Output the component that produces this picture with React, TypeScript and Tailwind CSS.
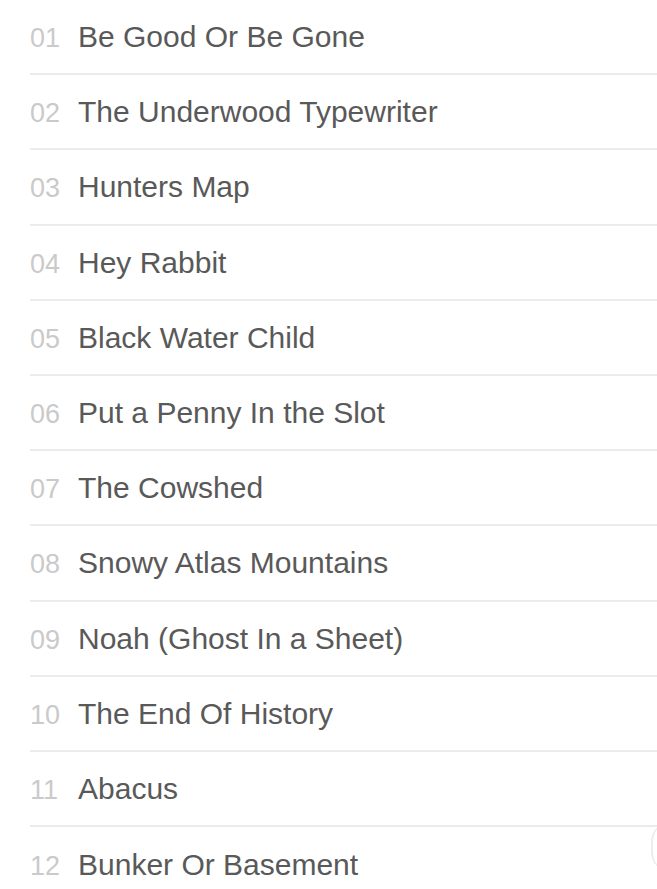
import React from "react";

const tracks = [
  "Be Good Or Be Gone",
  "The Underwood Typewriter",
  "Hunters Map",
  "Hey Rabbit",
  "Black Water Child",
  "Put a Penny In the Slot",
  "The Cowshed",
  "Snowy Atlas Mountains",
  "Noah (Ghost In a Sheet)",
  "The End Of History",
  "Abacus",
  "Bunker Or Basement",
];

const App: React.FC = () => {
  return (
    <div className="relative bg-white w-[657px] h-[889px] overflow-hidden font-['Liberation_Sans',Arial,sans-serif]">
      <ul className="pl-[30px]">
        {tracks.map((title, idx) => (
          <li
            key={idx}
            className={`flex items-center h-[75.2px] ${
              idx < tracks.length - 1 ? "border-b-2 border-[#ebebeb]" : ""
            }`}
          >
            <div className="flex items-baseline">
              <span className="text-[27px] text-[#cacaca] w-[48px] shrink-0">
                {String(idx + 1).padStart(2, "0")}
              </span>
              <span className="text-[30px] text-[#595959]">{title}</span>
            </div>
          </li>
        ))}
      </ul>
      <div className="absolute left-[651px] top-[822px] w-[40px] h-[50px] rounded-full border-l-2 border-[#ececec]"></div>
    </div>
  );
};

export default App;
